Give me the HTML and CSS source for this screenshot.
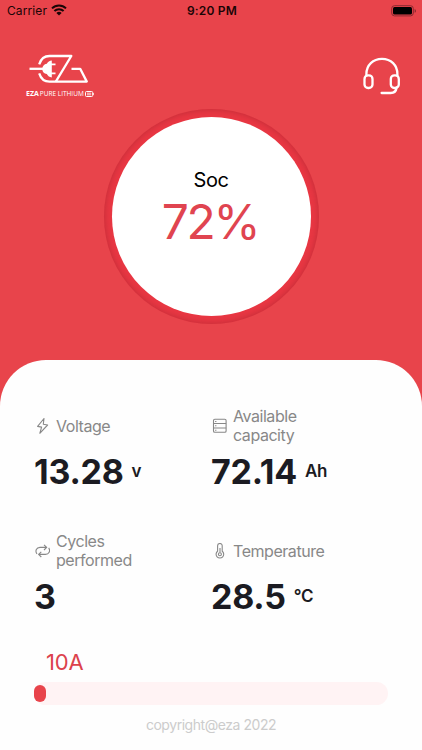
FILE: index.html
```html
<!DOCTYPE html>
<html lang="en">
<head>
    <meta charset="UTF-8">
    <meta name="viewport" content="width=device-width, initial-scale=1.0">
    <title>EZA Battery</title>
    <link rel="stylesheet" href="styles.css">
</head>
<body>
    <div class="status">
        <div class="carrier">
            <span>Carrier</span>
            <svg class="wifi" width="16" height="12" viewBox="0 0 16 12">
                <path d="M1 4.4a10 10 0 0 1 14 0M3.4 7a6.6 6.6 0 0 1 9.2 0" fill="none" stroke="#1a0506" stroke-width="2"/>
                <path d="M5.4 8.9a3.8 3.8 0 0 1 5.2 0L8 11.6z" fill="#1a0506"/>
            </svg>
        </div>
        <div class="time">9:20 PM</div>
        <div class="battery">
            <svg width="26" height="12" viewBox="0 0 26 12">
                <rect x=".7" y=".7" width="21.6" height="10.2" rx="2.8" fill="none" stroke="#8a2930"/>
                <rect x="2" y="2" width="19" height="7.6" rx="1.5" fill="#000"/>
                <path d="M23.6 4v3.8q1.4-.5 1.4-1.9t-1.4-1.9z" fill="#8a2930"/>
            </svg>
        </div>
    </div>
    <div class="header">
        <div class="logo">
            <svg class="mark" width="60" height="32" viewBox="0 0 60 32">
                <g fill="none" stroke="#fff" stroke-width="2.3" stroke-linejoin="round">
                    <path d="M10.2 10.300C12 4.600 15.500 2 20.500 2H42.300L26.800 27.600"/>
                    <path d="M10.200 19.300C12 25 15.500 27.600 20.500 27.600H57.800L51.200 14.800H42.500"/>
                    <path d="M.5 14.800H15"/>
                    <path d="M22 10.400h4.500M22 19.300h4.500" stroke-width="1.800"/>
                </g>
                <path d="M22.800 6.400v17c-2.200 0-4-1.300-5-3.300-2.700-.5-4.500-2.300-4.500-5.200s1.800-4.700 4.500-5.200c1-2 2.800-3.300 5-3.300z" fill="#fff"/>
            </svg>
            <div class="brand">
                <b>EZA</b><span>PURE LITHIUM</span>
                <svg width="9" height="6" viewBox="0 0 9 6">
                    <rect x=".5" y=".5" width="7.200" height="5" rx="1" fill="none" stroke="#fff"/>
                    <path d="M2 2.200h4.200M2 3.800h4.200M8.400 2v2" stroke="#fff" stroke-width=".8"/>
                </svg>
            </div>
        </div>
        <svg class="service" width="38" height="38" viewBox="0 0 38 38">
            <g fill="none" stroke="#fff" stroke-width="2.3" stroke-linecap="round">
                <path d="M3.400 18.500V17C3.400 8 10 1.900 19 1.900S34.400 8 34.400 17v1.500"/>
                <rect x="1.500" y="18.300" width="8" height="12.700" rx="3.600"/>
                <rect x="27.800" y="18.300" width="8" height="12.700" rx="3.600"/>
                <path d="M33.600 30.500c-.4 3.600-2.700 5.500-6 5.500h-9"/>
            </g>
        </svg>
    </div>
    <div class="ring">
        <div class="soc">
            <div class="soc-name">Soc</div>
            <div class="soc-num">72%</div>
        </div>
    </div>
    <div class="panel">
        <div class="list">
            <div class="item">
                <div class="label">
                    <svg width="16" height="16" viewBox="0 0 16 16">
                        <path d="M10 .5 3.600 8.400l4 .7-1.800 6.200L13.600 7 9.300 6.200z"/>
                    </svg>
                    <span>Voltage</span>
                </div>
                <div class="value"><span>13.28</span><small>v</small></div>
            </div>
            <div class="item">
                <div class="label">
                    <svg width="16" height="16" viewBox="0 0 16 16">
                        <rect x="2.500" y="1.300" width="12.600" height="13" rx="1.300"/>
                        <path d="M2.500 5.500h12.600M2.500 10h12.600M4.100 3.500h1.300M4.100 7.800h1.300M4.100 12.200h1.300"/>
                    </svg>
                    <span>Available capacity</span>
                </div>
                <div class="value"><span>72.14</span><small>Ah</small></div>
            </div>
            <div class="item">
                <div class="label">
                    <svg width="16" height="16" viewBox="0 0 16 16">
                        <path d="M3 10.900C.8 8.100 2.400 4.400 6 4.400h6.500M10 1.800l2.700 2.600L10 7M14.700 4.900c2 2.900.3 6.500-3.300 6.500H4.800M7.300 8.800l-2.700 2.600L7.300 14"/>
                    </svg>
                    <span>Cycles performed</span>
                </div>
                <div class="value"><span>3</span></div>
            </div>
            <div class="item">
                <div class="label">
                    <svg width="16" height="16" viewBox="0 0 16 16">
                        <path d="M6.600 8.200V2.800a2.300 2.300 0 0 1 4.600 0v5.400a3.800 3.800 0 1 1-4.600 0zM9 5v4.500"/>
                        <circle cx="8.900" cy="11.200" r="1.500"/>
                    </svg>
                    <span>Temperature</span>
                </div>
                <div class="value"><span>28.5</span><small>°C</small></div>
            </div>
        </div>
        <div class="current">10A</div>
        <div class="bar"><div class="bar-in"></div></div>
        <div class="copyright">copyright@eza 2022</div>
    </div>
</body>
</html>
```
FILE: styles.css
```css
html,body{
    margin: 0;
    padding: 0;
    height: 750px;
    overflow: hidden;
}
body{
    display: flex;
    flex-direction: column;
    background: #e8444b;
    font-family: Inter, "Liberation Sans", sans-serif;
}
svg{
    display: block;
    flex: none;
}
.status{
    display: grid;
    grid-template-columns: 1fr auto 1fr;
    align-items: center;
    height: 22px;
    padding: 0 5px 0 7px;
    color: #1a0506;
    font-size: 12px;
    line-height: 22px;
}
.carrier{
    display: flex;
    align-items: center;
    gap: 4px;
    letter-spacing: .1px;
}
.wifi{
    margin-top: -2px;
}
.time{
    font-weight: 600;
    letter-spacing: .2px;
}
.battery{
    justify-self: end;
}
.header{
    display: flex;
    justify-content: space-between;
    height: 87px;
    padding: 0 22px 0 25px;
}
.logo{
    padding-top: 32px;
}
.mark{
    margin-left: 4px;
}
.brand{
    display: flex;
    align-items: center;
    margin-top: 3px;
    color: #fff;
    font: 6.5px/9px "Open Sans", sans-serif;
    white-space: nowrap;
}
.brand b{
    margin: 0 1px 0 1px;
    font-size: 7px;
}
.brand svg{
    margin-left: 1px;
}
.service{
    margin: 35px -1px 0 0;
}
.ring{
    flex: none;
    align-self: center;
    box-sizing: border-box;
    width: 215px;
    height: 215px;
    padding: 8px;
    border-radius: 50%;
    background: #e93743;
    box-shadow: inset 0 0 7px #bd2d37;
}
.soc{
    height: 199px;
    border-radius: 50%;
    background: #fff;
    text-align: center;
}
.soc-name{
    padding-top: 50px;
    color: #000;
    font-size: 20px;
    line-height: 26px;
    letter-spacing: -.4px;
}
.soc-num{
    color: #e04450;
    font-size: 48px;
    line-height: 58px;
    letter-spacing: -2.4px;
    text-indent: -2px;
}
.panel{
    flex: 1;
    margin-top: 36px;
    padding: 46px 34px 0;
    border-radius: 46px 46px 0 0;
    background: #fefefe;
}
.list{
    display: grid;
    grid-template-columns: 177px 177px;
    grid-auto-rows: 125px;
}
.label{
    display: flex;
    align-items: center;
    gap: 6px;
    height: 40px;
    color: #888;
    font-size: 16px;
    line-height: 19px;
    letter-spacing: -.45px;
}
.label span{
    max-width: 95px;
}
.label svg{
    fill: none;
    stroke: #888;
    stroke-width: 1.1;
    stroke-linejoin: round;
}
.value{
    display: flex;
    align-items: center;
    gap: 8px;
    height: 50px;
    color: #1b1b22;
    font-size: 34px;
    font-weight: 700;
    letter-spacing: -.25px;
}
.value small{
    font-size: 17px;
    font-weight: 600;
}
.current{
    margin-left: 12px;
    color: #dc424c;
    font-size: 22px;
    line-height: 26px;
    margin-top: -7px;
    letter-spacing: -.2px;
}
.bar{
    box-sizing: border-box;
    height: 23px;
    margin-top: 7px;
    padding: 3px 0;
    border-radius: 12px;
    background: #fff3f4;
}
.bar-in{
    width: 12px;
    height: 17px;
    border-radius: 6px;
    background: #e8444b;
}
.copyright{
    margin-top: 11px;
    color: #ccc;
    font-size: 14px;
    line-height: 18px;
    letter-spacing: -.45px;
    text-align: center;
}
```
